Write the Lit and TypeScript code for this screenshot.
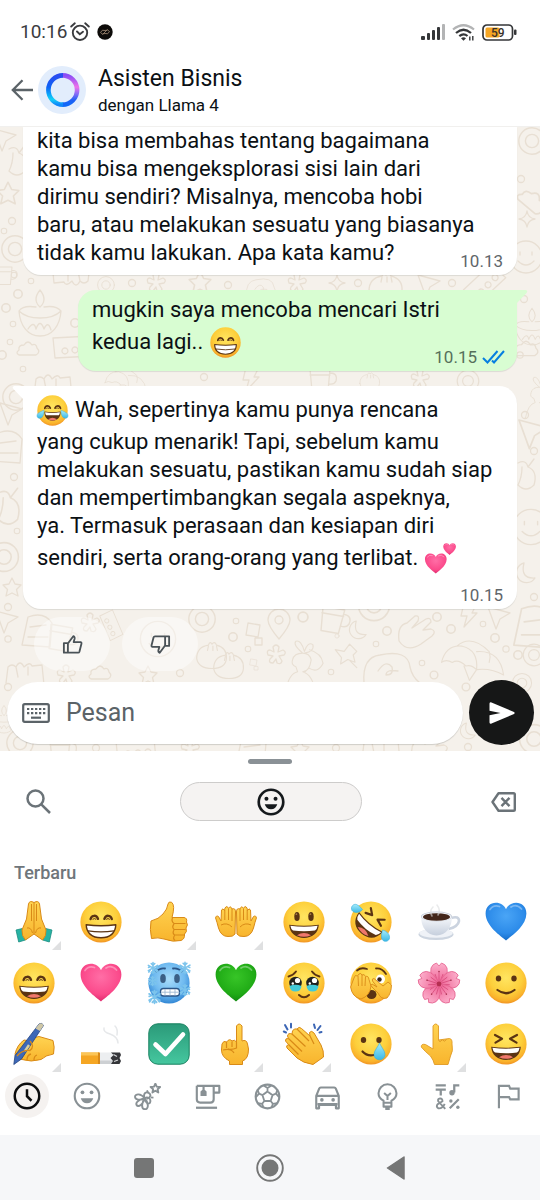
import { LitElement, html, svg, css, nothing, TemplateResult } from "lit";
import { customElement, property } from "lit/decorators.js";
import { classMap } from "lit/directives/class-map.js";

type Art = TemplateResult;

/* ---------- emoji artwork, drawn in a 42 x 42 box ---------- */

const BROWN = "#5b3413";
const face = svg`<circle cx="21" cy="21" r="20.6" fill="url(#face)" />`;

const tear = (d: string) => svg`<path d=${d} fill="url(#tear)" stroke="#39aede" stroke-width=".6" />`;

const grinEyes = svg`<g fill="none" stroke=${BROWN} stroke-width="2.4" stroke-linecap="round">
  <path d="M10.6 18c1.2-4.2 6-4.2 7.4-.2" /><path d="M24.4 17.8c1.4-4 6.2-4 7.4.2" /></g>
  <path d="M12.6 18.4q1.8-1.6 3.6 0M26.2 18.4q1.8-1.6 3.6 0" stroke=${BROWN} stroke-width="1" fill="none" />`;

const openMouth = svg`<path d="M6.2 23.8Q21 25.6 35.8 23.8C35.4 32.4 29 37 21 37S6.6 32.4 6.2 23.8Z" fill=${BROWN} />
  <path d="M7.4 24.8Q21 26.6 34.6 24.8Q34 28.6 32 29.6Q21 31 10 29.6Q8 28.6 7.4 24.8Z" fill="#fff" />
  <path d="M14 34.2Q21 29.6 28 34.2Q21 37.4 14 34.2Z" fill="#f0786c" />`;

const heart = (fill: string) => svg`<path
  d="M21 39.5C16 35 .8 25.500 .6 12.500C.6 5.500 5.600 1.800 10.800 1.800C15.500 1.800 19.300 4.400 21 8.200C22.700 4.400 26.500 1.800 31.200 1.800C36.400 1.800 41.400 5.500 41.400 12.500C41.200 25.500 26 35 21 39.500Z"
  fill=${fill} />
  <path d="M5 8.500Q8.500 3.500 14.500 5.500M26 6Q31.500 2.500 36.500 8" stroke="#fff" stroke-opacity=".35" stroke-width="1.800" fill="none" stroke-linecap="round" />`;

const flake = (x: number, y: number, s: number) => svg`<g transform="translate(${x} ${y}) scale(${s})"
  stroke="#7cc4ec" stroke-width="1.700" fill="none" stroke-linecap="round">
  <path d="M0-6V6M-5.200-3L5.200 3M-5.200 3L5.200-3M-2-5L0-3L2-5M-2 5L0 3L2 5M-5-.6L-2.800-1.600M-4.600 4.600L-2.600 1.500M5-.6L2.800-1.600M4.600 4.600L2.600 1.500" /></g>`;

const EMOJI: Record<string, Art> = {
  beam: svg`${face}${grinEyes}
    <path d="M6.200 23.800Q21 25.800 35.800 23.800C35.600 32 30 36.800 21 36.800S6.400 32 6.200 23.800Z" fill="#fff" stroke=${BROWN} stroke-width="1.400" stroke-linejoin="round" />
    <path d="M8 29.800Q21 32 34 29.800" fill="none" stroke=${BROWN} stroke-width="1.200" />`,
  smile: svg`${face}${grinEyes}${openMouth}`,
  smiley: svg`${face}<ellipse cx="14" cy="15.500" rx="2.700" ry="4.600" fill=${BROWN} /><ellipse cx="28" cy="15.500" rx="2.700" ry="4.600" fill=${BROWN} />
    <circle cx="13.400" cy="13.200" r=".9" fill="#a67a48" /><circle cx="27.400" cy="13.200" r=".9" fill="#a67a48" />${openMouth}`,
  laugh: svg`${face}<path d="M10 12L17 15.800L10.500 19.600M32 12L25 15.800L31.500 19.600" fill="none" stroke=${BROWN} stroke-width="2.200" stroke-linecap="round" stroke-linejoin="round" />${openMouth}`,
  joy: svg`${face}${grinEyes}
    <path d="M10 22.500Q21 24.500 32 22.500C32 30.500 28 35 21 35S10 30.500 10 22.500Z" fill=${BROWN} />
    <path d="M11 23.400Q21 25.400 31 23.400Q30.800 26.400 29.500 27.600H12.500Q11.200 26.400 11 23.400Z" fill="#fff" />
    <path d="M15 32.800Q21 28.600 27 32.800Q21 36 15 32.800Z" fill="#f0786c" />
    ${tear("M9.500 20.500C9.500 20.500 9.800 31 3.800 31.500C-.5 31.500-1 27 1.600 24.600Q4 22.500 9.500 20.500Z")}
    ${tear("M32.500 20.500C32.500 20.500 32.200 31 38.200 31.500C42.500 31.500 43 27 40.400 24.600Q38 22.500 32.500 20.500Z")}`,
  rofl: svg`${face}<g transform="rotate(40 21 21)">
      <path d="M12 10.500L17.500 15L11 17.500M30 10.500L24.500 15L31 17.500" fill="none" stroke=${BROWN} stroke-width="2.200" stroke-linecap="round" stroke-linejoin="round" />
      <path d="M5.500 21Q21 25 36.500 21C36 31.500 29.500 36 21 36S6 31.500 5.500 21Z" fill=${BROWN} />
      <path d="M6.600 22.400Q21 26 35.400 22.400Q35 26.500 33 28Q21 31 9 28Q7 26.500 6.600 22.400Z" fill="#fff" />
      <path d="M14 33.400Q21 28.500 28 33.400Q21 36.600 14 33.400Z" fill="#f0786c" /></g>
    ${tear("M12.500 8.500C10 12 4 12.500 2 9.500C.2 6 3.200 2.500 6.500 3.500Q9.500 4.500 12.500 8.500Z")}
    ${tear("M32.500 29C37 30 40.500 34 39.300 38C37.500 41.500 32.500 41 31.600 37Q31 33.500 32.500 29Z")}`,
  slight: svg`${face}<ellipse cx="13.500" cy="16.500" rx="2.700" ry="3" fill=${BROWN} /><ellipse cx="29" cy="16.500" rx="2.700" ry="3" fill=${BROWN} />
    <path d="M12.500 28Q21 34.500 29.500 28" fill="none" stroke=${BROWN} stroke-width="2.200" stroke-linecap="round" />`,
  happyTear: svg`${face}<ellipse cx="13.500" cy="17" rx="2.700" ry="3" fill=${BROWN} /><ellipse cx="29" cy="17" rx="2.700" ry="3" fill=${BROWN} />
    <path d="M12.500 28.500Q17 33.500 24 32" fill="none" stroke=${BROWN} stroke-width="2.200" stroke-linecap="round" />
    ${tear("M29.500 20C31 24 35 27.500 35 31.500C35 38.500 24 38.500 24 31.500C24 27.500 28 24 29.500 20Z")}`,
  holding: svg`${face}
    <path d="M5.500 14.500Q10 13.500 13 9.500M36.500 14.500Q32 13.500 29 9.500" fill="none" stroke=${BROWN} stroke-width="1.900" stroke-linecap="round" />
    <circle cx="12.500" cy="21" r="6.300" fill="#20201f" /><circle cx="29.500" cy="21" r="6.300" fill="#20201f" />
    <path d="M6.500 24Q12.500 21.500 18.500 24Q18 29.500 12.500 29.500T6.500 24ZM23.500 24Q29.500 21.500 35.500 24Q35 29.500 29.500 29.500T23.500 24Z" fill="#43c9d8" />
    <g fill="#fff"><circle cx="14.500" cy="18.500" r="2.600" /><circle cx="31.500" cy="18.500" r="2.600" /><circle cx="9.800" cy="21.500" r="1.200" /><circle cx="26.800" cy="21.500" r="1.200" /></g>
    <path d="M16 33Q21 37.500 26 33" fill="none" stroke=${BROWN} stroke-width="2" stroke-linecap="round" />`,
  peek: svg`${face}
    <path d="M7 8.500Q11 5 17 7M26 6.500Q32 6 36 12" fill="none" stroke=${BROWN} stroke-width="1.800" stroke-linecap="round" />
    <circle cx="30.500" cy="17" r="4.500" fill="#fff" /><circle cx="29.500" cy="17.500" r="2.200" fill="#39261a" />
    <ellipse cx="21.500" cy="32.500" rx="5" ry="4.500" fill=${BROWN} />
    <path d="M.6 25L4 16Q5 12 7.500 14L9 12Q11 10.500 12 13Q14.500 11.500 15.500 14.500Q18.500 13.500 19 17.500L21 24Q20 34 11 37Q2 35 .6 25Z" fill="url(#hand)" stroke="#d98a17" stroke-width=".9" />
    <path d="M41.400 23L38 20L33 24L24 16.500Q21.500 16.500 22.500 19L27 25L22 22Q20 23 22 25L28 31Q31 38 37 36Q41.500 31 41.400 23Z" fill="url(#hand)" stroke="#d98a17" stroke-width=".9" />
    <path d="M8 14L8.500 24M12 13L12 24M15.500 15L15 24" stroke="#d98a17" stroke-width=".9" />`,
  cold: svg`<circle cx="21" cy="21" r="20.600" fill="url(#ice)" />
    <path d="M8.500 9.500Q12 5.500 17 6.500M25 6.500Q30 5.500 33.500 9.500" fill="none" stroke="#2c5688" stroke-width="1.800" stroke-linecap="round" />
    <ellipse cx="15" cy="16.500" rx="2.800" ry="4.600" fill="#3b5f86" /><ellipse cx="29" cy="16.500" rx="2.800" ry="4.600" fill="#3b5f86" />
    <rect x="12.500" y="26.500" width="19" height="7.500" rx="3" fill="#fff" stroke="#2c5688" stroke-width="1.300" />
    <path d="M13 30.200H31M17 27V33.500M22 27V33.500M27 27V33.500" stroke="#9fb8d3" stroke-width=".9" />
    ${flake(5, 6, 0.9)}${flake(37, 6, 0.95)}${flake(4.5, 19, 0.75)}${flake(37, 28, 0.9)}${flake(6.5, 35, 1.05)}`,
  pinkHeart: heart("url(#pink)"),
  greenHeart: heart("url(#green)"),
  blueHeart: heart("url(#blue)"),
  twoHearts: svg`<g transform="translate(-.5 13) scale(.72)">${heart("url(#pink)")}</g><g transform="translate(24.500 -.5) scale(.42)">${heart("url(#pink)")}</g>`,
  check: svg`<rect x=".8" y=".8" width="40.400" height="40.400" rx="9" fill="url(#mint)" stroke="#17805f" stroke-width="1" />
    <path d="M7.500 21.500L17.500 31L35 11.500" fill="none" stroke="#fff" stroke-width="4.600" stroke-linecap="round" stroke-linejoin="round" />`,
  pray: svg`<path d="M8 27.500L1 29L4 41L11.500 39ZM34 27.500L41 29L38 41L30.500 39Z" transform="translate(2.100) scale(.9 1)" fill="#27b3a4" stroke="#15897c" stroke-width=".8" />
    <path d="M21 1.500Q16.500-1 15.500 3L13.500 18L9 29Q8.500 35 12.500 39L21 33L29.500 39Q33.500 35 33 29L28.500 18L26.500 3Q25.500-1 21 1.500Z" fill="url(#hand)" stroke="#d98a17" stroke-width="1" />
    <path d="M21 1.500V33M18.500 3V20M23.500 3V20M14 27Q18 26 19.500 32M28 27Q24 26 22.500 32" fill="none" stroke="#d98a17" stroke-width="1" />`,
  thumb: svg`<path d="M3 20Q11 18 15 13Q19.500 8 20 3Q20.500 .2 23.500 1.200Q27.500 4 24 16.500H36Q39.500 17 38.500 21Q40.500 24 38 27Q39.500 31 36.500 33Q37 38 33 39.500Q25 41.500 16 38Q10 36 3.500 37.500Q1.500 28 3 20Z" fill="url(#hand)" stroke="#d98a17" stroke-width="1" />
    <path d="M37.500 22.500H26Q23 20 24.500 17M37.500 28.500H26Q23.500 26 26 23M36 34H26.500Q24 32 26 29M27 39.500Q24.500 37.500 26.500 34.500" fill="none" stroke="#d98a17" stroke-width="1.200" />`,
  palms: svg`<path d="M20 33Q18 36 13 35.500Q6 35.500 3.500 27Q2 21 .6 17Q1 14 3.500 15.500L6 20L6.500 9Q8 6.500 9.500 9.500L10 7Q12 4 13.500 7.500Q15.500 4 17 8Q20.500 6.500 20.500 11Z" fill="url(#hand)" stroke="#d98a17" stroke-width="1" />
    <path d="M22 33Q24 36 29 35.500Q36 35.500 38.500 27Q40 21 41.400 17Q41 14 38.500 15.500L36 20L35.500 9Q34 6.500 32.500 9.500L32 7Q30 4 28.500 7.500Q26.500 4 25 8Q21.500 6.500 21.500 11Z" fill="url(#hand)" stroke="#d98a17" stroke-width="1" />
    <path d="M9.800 9V19M13.500 8V19M17 8V20M32.200 9V19M28.500 8V19M25 8V20M6 24Q12 21 17 26M36 24Q30 21 25 26" fill="none" stroke="#d98a17" stroke-width="1" />`,
  point: svg`<path d="M18 19V3Q20.500-1 23.500 3V18Q28 16 29 21L30 26Q30 36 24 38V41.500H11V38Q3 34 3 27L3.500 21Q5 17 8 19Q11 15 13.500 18Q16 16 18 19Z" fill="url(#hand)" stroke="#d98a17" stroke-width="1" transform="translate(3.500)" />
    <path d="M11.500 19V25M17 18.500V24M21.500 19V25Q17 27 13 26M8 27Q16 25 19 30" fill="none" stroke="#d98a17" stroke-width="1.200" />`,
  pointBack: svg`<path d="M12.500 20V3Q15-1 18 3V17L29 15.500Q32 16 31.500 21Q33 28 30 33L27.500 41.500H14Q13 37 10 33Q4 28 .8 24Q.5 20.500 5 21.500L12.500 26Z" fill="url(#hand)" stroke="#e09a24" stroke-width=".9" transform="translate(2.500)" />
    <path d="M20.500 17.500Q22 20 24 17M24.500 17Q26.500 19.500 28.500 16.500" fill="none" stroke="#e09a24" stroke-width="1" />`,
  clap: svg`<g stroke="#3c66b5" stroke-width="2" stroke-linecap="round"><path d="M2 2L4.500 6.500M8 .8L8 4.500M.8 8.500L3 9.500M37.500 3L34.500 7M31 1.500L32 5M38.500 9L36.500 9.500" /></g>
    <path d="M14 6Q16 3 18.500 5.500L27 13L26.500 9.500Q28.500 7 31 10L38 22Q41 28 40.500 34L30 41.500Q20 40 14 35L4 25Q2.500 22.500 5.500 21.500L2.500 18Q2 15 5.500 15.500L4.500 13Q5 9.500 9 11L9.500 8Q11 5 14 6Z" fill="url(#hand)" stroke="#d98a17" stroke-width="1" />
    <path d="M14 6L26 18M9 11L22.500 23.500M5.500 15.500L19 28.500M5.500 21.500L15.500 31.500M27 13L31 21" fill="none" stroke="#d98a17" stroke-width="1.200" />`,
  write: svg`<path d="M2 31Q4 22 11 17L17 18Q20 14 26 13.500L40 17.500Q42 24 40.500 31Q33 32 28 36.500Q18 39.500 9 36.500Q3 37 2 31Z" fill="url(#hand)" stroke="#d98a17" stroke-width="1" />
    <path d="M26 1Q29-1 30.500 2.500L8.500 36L.8 41.500L2 32.500Z" fill="#3d68b8" stroke="#234482" stroke-width=".8" />
    <path d="M26 1Q29-1 30.500 2.500L27 8L22.500 5.500Z" fill="#cfc7a6" /><path d="M16 22L12 28" stroke="#d9d0a2" stroke-width="2.400" />
    <path d="M4 33Q9 27 17 27.500Q22 23 17 18M14 37Q14 32 18 31M21 37Q21 33 24 32" fill="none" stroke="#d98a17" stroke-width="1.300" />`,
  smoke: svg`<path d="M1 29.500H19V41H1Z" fill="#f5a623" /><path d="M1 29.500H19V32.500H1Z" fill="#fbc557" /><rect x="18" y="29.500" width="2" height="11.500" fill="#d8891a" />
    <rect x="20" y="29.500" width="15" height="11.500" fill="#eceef0" /><rect x="20" y="37.500" width="15" height="3.500" fill="#cdd0d3" />
    <path d="M31 29.500H40L41 32L39.500 35L41 38L39.500 41H31L33 38L30.500 35L33.500 32Z" fill="#35363a" /><path d="M33.500 31.500L37 33.500M34 38.500L38 37" stroke="#d5d7d9" stroke-width="1.300" />
    <path d="M38 20Q38 14 30 11Q23 9 24 5M37 12Q38 6 35 3" fill="none" stroke="#e6e8ea" stroke-width="1.500" stroke-linecap="round" />`,
  coffee: svg`<ellipse cx="18" cy="33.500" rx="17.500" ry="5.500" fill="#cdd5e0" /><ellipse cx="18" cy="32.300" rx="16.500" ry="4.500" fill="#eff2f7" />
    <path d="M33 17Q41 14.500 41 20Q40 26 30.500 28" fill="none" stroke="#cbd3df" stroke-width="2.600" />
    <path d="M3 15.500C3 26 9 34.500 18.500 34.500S34 26 34 15.500Z" fill="url(#cup)" /><ellipse cx="18.500" cy="15.500" rx="15.500" ry="5" fill="#c3cad6" /><ellipse cx="18.500" cy="15.700" rx="14.700" ry="4.500" fill="#f1f3f7" />
    <ellipse cx="18.500" cy="16" rx="13.500" ry="3.800" fill="#43261a" />
    <path d="M14 15Q11 10 15 6M20 14Q23 9 19 4" fill="none" stroke="#dcdddf" stroke-opacity=".6" stroke-width="1.600" stroke-linecap="round" />`,
  blossom: svg`${[0, 72, 144, 216, 288].map(
      (a) => svg`<g transform="rotate(${a} 21 22)"><path d="M21 22Q11 14 13 6Q14.500 2 18.500 1L21 4L23.500 1Q27.500 2 29 6Q31 14 21 22Z" fill="url(#petal)" stroke="#e5628f" stroke-width=".8" />
      <path d="M21 20V10M19.500 19L17 12M22.500 19L25 12" stroke="#d84d7e" stroke-width=".8" /><circle cx="21" cy="9.500" r=".8" fill="#a8324f" /></g>`
    )}<circle cx="21" cy="22" r="2.400" fill="#b52f51" />`,
};

@customElement("emoji-glyph")
export class EmojiGlyph extends LitElement {
  @property() name = "smile";

  static styles = css`
    :host { display: inline-block; width: 42px; height: 42px; }
    .art { display: block; width: 100%; height: 100%; overflow: visible; }
  `;

  render() {
    return html`<svg class="art" viewBox="0 0 42 42" aria-hidden="true">
      <defs>
        <radialGradient id="face" cx=".5" cy=".38" r=".64"><stop offset="0" stop-color="#ffe561" /><stop offset=".6" stop-color="#fdcf3b" /><stop offset=".85" stop-color="#fab32c" /><stop offset="1" stop-color="#ee8b20" /></radialGradient>
        <radialGradient id="ice" cx=".5" cy=".4" r=".62"><stop offset="0" stop-color="#a9dcfa" /><stop offset=".6" stop-color="#6fbaf0" /><stop offset="1" stop-color="#2d83d3" /></radialGradient>
        <linearGradient id="hand" x2="0" y2="1"><stop offset="0" stop-color="#ffd452" /><stop offset="1" stop-color="#f8b42d" /></linearGradient>
        <linearGradient id="tear" x2="0" y2="1"><stop offset="0" stop-color="#a6ecfb" /><stop offset="1" stop-color="#3cb9e6" /></linearGradient>
        <radialGradient id="pink" cx=".5" cy=".35" r=".65"><stop offset="0" stop-color="#ff6ea6" /><stop offset=".7" stop-color="#fb4a8b" /><stop offset="1" stop-color="#e02a6d" /></radialGradient>
        <radialGradient id="green" cx=".5" cy=".35" r=".65"><stop offset="0" stop-color="#37c527" /><stop offset=".7" stop-color="#20ab16" /><stop offset="1" stop-color="#118a10" /></radialGradient>
        <radialGradient id="blue" cx=".5" cy=".35" r=".65"><stop offset="0" stop-color="#4aa5f6" /><stop offset=".7" stop-color="#2c8be9" /><stop offset="1" stop-color="#146cc9" /></radialGradient>
        <linearGradient id="mint" x2="0" y2="1"><stop offset="0" stop-color="#2b9a79" /><stop offset="1" stop-color="#45c79f" /></linearGradient>
        <linearGradient id="cup" x2="0" y2="1"><stop offset="0" stop-color="#f7f9fc" /><stop offset="1" stop-color="#c6cfdd" /></linearGradient>
        <linearGradient id="petal" x2="0" y2="1"><stop offset="0" stop-color="#fcb0cc" /><stop offset="1" stop-color="#ee6193" /></linearGradient>
      </defs>
      ${EMOJI[this.name] ?? nothing}
    </svg>`;
  }
}

/* ---------- wallpaper line drawings, each centred on the origin ---------- */

const DOODLES: Record<string, string> = {
  dot: "M3.500 0A3.500 3.500 0 1 1-3.500 0A3.500 3.500 0 1 1 3.500 0Z",
  ring: "M12 0A12 12 0 1 1-12 0A12 12 0 1 1 12 0ZM6 0A6 6 0 1 1-6 0A6 6 0 1 1 6 0Z",
  lamp: "M-21-5C-20 10-12 20 0 20S20 10 21-5M-21-5Q-14 2 0 2T21-5Q16-11 4-9M-21-5Q-17-11-4-9M0-9Q-8-16 0-26Q8-16 0-9M-12 13Q-6 4-4 13Q0 2 4 13Q8 4 11 14",
  cloud: "M-9 6H8Q13 3 9-1Q8-6 4-4Q0-10-4-4Q-10-4-9 1Q-13 4-9 6Z",
  pin: "M0 14Q-11 1-11-5A11 11 0 1 1 11-5Q11 1 0 14ZM4-5A4 4 0 1 1-4-5A4 4 0 1 1 4-5Z",
  moon: "M-2-10A10 10 0 1 0 9 5Q-6 6-2-10Z",
  star: "M0-9L3-3L9-2L4.500 2.500L6 9L0 6L-6 9L-4.500 2.500L-9-2L-3-3Z",
  spark: "M0-8Q1-1 8 0Q1 1 0 8Q-1 1-8 0Q-1-1 0-8Z",
  bun: "M-17 4Q-17-9-4-11Q-2-16 0-12Q3-16 5-11Q17-8 16 4Q15 15 0 15T-17 4ZM-4-10L-5-5M1-10V-5M5-10L6-5",
  rock: "M-18 8Q-20-8-10-10L-2-17Q3-18 1-12L-5-5L9-14Q14-16 14-11L6-3L14-4Q20-2 15 3L4 11Q-10 20-18 8Z",
  umbrella: "M-25 6Q-20-14-2-12Q16-8 14 14Q8 8 2 10Q-6 2-13 6Q-20 2-25 6ZM-8-12Q8-26 28-6Q30 0 28 6M14-6Q40-8 44 20Q30 12 14 14M0 10L6 26L14 14",
  flower: "M-3-8Q0-12 3-8L2-3L7-5Q11-3 8 0L3 1L6 6Q5 10 1 8L0 4L-3 8Q-8 8-6 4L-3 1L-8 0Q-10-5-6-5L-2-3Z",
  tack: "M-12-6L-2-4L4-12L12-4L8 0L10 8L2 5L-6 10L-5 3L-12-6ZM4 6L12 14",
  box: "M-6-8L6-6L4 6L-8 4ZM1 7H8V14H1Z",
  girl: "M-18 30Q-14 10-4 8L-6 2Q-12 0-10-6Q-8-14 2-14Q10-14 12-6Q10 8 2 8Q14 12 16 30M2-14Q-10-24-6-28Q0-30 4-16Q8-28 14-24Q16-16 4-14M10-18Q24-14 26-2Q20 10 10 4",
  blob: "M-26 16Q-28-10-10-12Q18-18 20 0Q22 10 30 16M-12 4Q-4-8 2 0Q4 8-4 8Q-4 2 8 4",
  cup: "M-10-10H10L8 12H-8ZM10-6Q18-6 16 2Q14 6 9 5M-10-4H10",
  plane: "M-10-10L12-4L2 2L-2 12Z",
  bolt: "M-4-12L8-10L4-2H9L-4 12L-1 1H-7Z",
  cake: "M-18 12L-16-4Q-12-8-8-4Q-4-12 0-4Q6-10 8-5L18-6L20 14M-8-4L-6 6M4-4V4",
  loaf: "M-14 14L-8-14Q8-20 16-8L14 16ZM-6-4L10-6M-8 6H12",
  pepper: "M-8-10Q0-14 2-6Q12-2 8 12Q0 20-8 12Q-4 4-4-6M2-6L8-14",
  smileFace: "M16 0A16 16 0 1 1-16 0A16 16 0 1 1 16 0ZM-6-5V-2M6-5V-2M-8 4Q0 12 8 4",
  box2: "M-20-8L18-10L20 10L-18 12ZM-8 2A3 3 0 1 1-8.100 2M2 1A3 3 0 1 1 1.900 1M12 0A3 3 0 1 1 11.900 0",
};

const PLACED: [string, number, number, number?, number?][] = [
  ["plane", 4, 12], ["pepper", 17, 32], ["star", 8, 66, 1.2], ["dot", 12, 94], ["dot", 4, 104, 0.8], ["ring", 15, 122, 1.1],
  ["cup", 4, 148, 0.8], ["dot", 14, 148, 0.8], ["dot", 18, 167, 1.2], ["lamp", 40, 189], ["dot", 31, 154, 0.8], ["dot", 6, 181, 1.2], ["dot", 13, 197, 0.8],
  ["dot", 75, 196, 1.2], ["cloud", 28, 222], ["dot", 10, 215, 0.8], ["box2", 73, 219], ["dot", 2, 228, 1.2], ["cake", 52, 256], ["dot", 23, 242, 0.8], ["ring", 16, 270, 1.1],
  ["cake", 72, 150, 1, 180], ["ring", 106, 158, 0.7], ["flower", 156, 156], ["dot", 132, 156], ["star", 200, 155, 1.2], ["dot", 228, 158], ["blob", 262, 160, 0.6],
  ["flower", 297, 156], ["spark", 337, 156], ["dot", 358, 156], ["bun", 386, 160], ["plane", 428, 158], ["dot", 452, 156], ["box2", 484, 156, 1, -40],
  ["ring", 532, 14, 1.1], ["dot", 521, 52], ["cloud", 532, 74, 1.3, 40], ["spark", 527, 92], ["smileFace", 526, 130, 1], ["lamp", 532, 202, 0.8], ["dot", 524, 172], ["dot", 520, 228, 0.9],
  ["cloud", 526, 222, 1.1], ["umbrella", 120, 252, 0.6], ["flower", 420, 252], ["ring", 468, 254, 0.9], ["dot", 204, 250], ["bolt", 250, 252], ["cup", 320, 252], ["bun", 370, 254, 0.6],
  ["plane", 10, 286], ["loaf", 6, 320], ["dot", 14, 350], ["pepper", 8, 378, 1.2], ["dot", 17, 404, 0.8], ["ring", 4, 430, 1.2], ["star", 12, 460], ["dot", 8, 480],
  ["girl", 538, 270, 0.7], ["dot", 525, 288], ["plane", 532, 306, 1.3], ["dot", 534, 324], ["pepper", 526, 346], ["smileFace", 531, 400, 1.1], ["moon", 526, 446], ["dot", 534, 470],
  ["plane", 6, 494], ["loaf", 36, 504, 1], ["dot", 8, 512, 0.9], ["cup", 60, 510, 1.1, 10], ["flower", 90, 496], ["box2", 112, 498, 0.7, 70], ["smileFace", 158, 512, 1.1], ["ring", 202, 492, 1.1],
  ["bun", 212, 528, 0.9], ["bun", 229, 538, 0.9], ["dot", 236, 494, 0.8], ["dot", 233, 510, 1.2], ["box", 254, 504], ["pin", 279, 498], ["dot", 303, 490, 1.4], ["dot", 248, 522, 0.8], ["flower", 276, 528],
  ["box", 254, 536, 0.5], ["girl", 301, 538, 0.85], ["cup", 332, 492, 1.1, 10], ["dot", 337, 509, 0.6], ["moon", 358, 503, 0.9], ["ring", 374, 478, 1.3], ["dot", 387, 504, 1.2], ["dot", 376, 517, 0.8],
  ["tack", 346, 528, 0.9], ["rock", 417, 506], ["dot", 437, 490, 1.2], ["dot", 451, 502, 1.2], ["blob", 390, 540], ["bolt", 468, 488], ["plane", 498, 490], ["dot", 483, 497, 0.8],
  ["umbrella", 464, 530, 0.9], ["dot", 495, 511, 1.2], ["dot", 506, 522, 0.9], ["dot", 518, 528, 1.2], ["loaf", 532, 500, 1.3], ["ring", 534, 528, 0.9], ["dot", 422, 536, 0.8], ["dot", 434, 548, 1.1], ["dot", 331, 545, 0.8],
  ["cake", 24, 544], ["dot", 8, 560], ["flower", 66, 548], ["cloud", 100, 546], ["star", 148, 548], ["dot", 180, 546], ["ring", 522, 556, 0.8], ["ring", 20, 616, 1.1], ["cup", 60, 622], ["dot", 96, 621],
  ["box2", 136, 622], ["flower", 190, 622], ["loaf", 250, 624], ["star", 300, 622], ["dot", 336, 621], ["cake", 380, 620], ["rock", 430, 622], ["dot", 468, 620], ["ring", 534, 612, 1.2], ["lamp", 4, 594, 0.6],
  ["dot", 466, 560, 1.1], ["moon", 468, 604, 0.8],
];

/* ---------- interface icons ---------- */

const icon = (size: number, body: Art, box = "0 0 24 24") =>
  html`<svg class="icon" width=${size} height=${size} viewBox=${box} fill="none" stroke="currentColor" stroke-width="2" aria-hidden="true">${body}</svg>`;

const smileIcon = svg`<circle cx="12" cy="12" r="9.200" /><circle cx="8.600" cy="9.600" r="1.500" fill="currentColor" stroke="none" /><circle cx="15.400" cy="9.600" r="1.500" fill="currentColor" stroke="none" />
  <path d="M7.300 13.600H16.700Q15.600 17.400 12 17.400T7.300 13.600Z" fill="currentColor" stroke="none" />`;

const thinSmileIcon = svg`<circle cx="12" cy="12" r="9.200" stroke-width="1.600" /><circle cx="8.600" cy="9.200" r="1.400" fill="currentColor" stroke="none" /><circle cx="15.400" cy="9.200" r="1.400" fill="currentColor" stroke="none" />
  <path d="M7.300 13.600H16.700Q15.600 17.400 12 17.400T7.300 13.600Z" fill="currentColor" stroke="none" />`;

const thumbIcon = svg`<path d="M3 10.500H7.200V20.500H3ZM7.200 11L12.800 3.300Q14.600 4 14.200 6L13.200 9.500H20.600Q21.600 9.700 21.400 11L19.200 19.500Q18.900 20.500 17.800 20.500H7.200" stroke-width="1.900" stroke-linejoin="round" />`;

const CATEGORIES: { id: string; label: string; art: Art; size?: number }[] = [
  { id: "recent", label: "Terbaru", size: 30, art: svg`<circle cx="12" cy="12" r="9.800" /><path d="M12 6.500V12.200L15.600 15.800" />` },
  { id: "smileys", label: "Smiley", size: 32, art: thinSmileIcon },
  {
    id: "nature", label: "Hewan dan alam",
    art: svg`<g stroke-width="1.700" stroke-linejoin="round"><path d="M19 .5L20.200 3.200L23.200 3.500L21 5.500L21.600 8.400L19 6.900L16.400 8.400L17 5.500L14.800 3.500L17.800 3.200Z" />
      <path d="M9.500 13.500C6 9 1 9.500 .9 12.200S5.500 16 9.500 13.500ZM9.500 13.500C5 14.500 1 17 2.300 19.500S8.500 19 9.500 13.500ZM9.500 13.500C7 17 6 23 9.500 23.300S13.500 18 9.500 13.500ZM9.500 13.500C12 12 15 13.500 14.500 16.500S11 19 9.500 13.500ZM9 12.500C8.500 9 10.500 7.500 13 8.800S15 12.800 11.500 14" /><path d="M12.500 8.500L11.500 6.500M14.800 12.800L17.300 13" /></g>`,
  },
  {
    id: "food", label: "Makanan dan minuman",
    art: svg`<path d="M2.500 2.500H22.500V8.500H17.500M17.500 2.500V14.500Q17.500 17.500 14.500 17.500H5.500Q2.500 17.500 2.500 14.500V2.500M8.500 2.500V6" stroke-width="1.900" stroke-linejoin="round" /><path d="M5.800 11.500V7.600L8.500 5L11.200 7.600V11.500Z" fill="currentColor" stroke="none" /><path d="M1.800 22H20.500" />`,
  },
  {
    id: "sports", label: "Aktivitas",
    art: svg`<circle cx="12" cy="12" r="10.500" stroke-width="1.900" /><path d="M12 7.500L16.500 10.800L14.800 16H9.200L7.500 10.800ZM12 7.500V4.500L8.500 2.300M12 4.500L15.500 2.300M16.500 10.800L19.500 9.500L21 5.800M19.500 9.500L22.300 12.500M14.800 16L16.800 18.500L20.500 18M16.800 18.500L15.500 22M9.200 16L7.200 18.500L3.500 18M7.200 18.500L8.500 22M7.500 10.800L4.500 9.500L3 5.800M4.500 9.500L1.700 12.500" stroke-width="1.600" />`,
  },
  {
    id: "travel", label: "Perjalanan",
    art: svg`<path d="M2 11.500L4.600 5Q5 4 6 4H18Q19 4 19.400 5L22 11.500V22.500H19.500V19.500H4.500V22.500H2ZM2 11.500H22" stroke-width="1.900" stroke-linejoin="round" /><path d="M3 18.800H21" /><circle cx="7" cy="15" r="1.600" fill="currentColor" stroke="none" /><circle cx="17" cy="15" r="1.600" fill="currentColor" stroke="none" />`,
  },
  {
    id: "objects", label: "Objek",
    art: svg`<path d="M8.500 17.500V15.800Q4 13.500 4 9.200A8 8 0 0 1 20 9.200Q20 13.500 15.500 15.800V17.500ZM8.500 17.500V21H15.500V17.500M12 15V11.500L9 8.800M12 11.500L15 8.800M10 23H14" stroke-width="1.800" stroke-linejoin="round" />`,
  },
  {
    id: "symbols", label: "Simbol",
    art: svg`<path d="M1.500 2H10.500M1.500 5.800H10.500M6 6V11M18 8.500V2H22.500M14 22.500L22 14.500" /><circle cx="16" cy="8.700" r="2.400" fill="currentColor" stroke="none" /><circle cx="15" cy="16" r="1.500" fill="currentColor" stroke="none" /><circle cx="21.200" cy="21.500" r="1.500" fill="currentColor" stroke="none" />
      <path d="M10 23L3.800 16.300Q3 14 5.300 13.800T7.500 16.200L3.300 18.800Q1.500 21 3.800 22.500Q7.500 23 9.500 18.500" stroke-width="1.700" />`,
  },
  { id: "flags", label: "Bendera", art: svg`<path d="M3.500 22.500V2.500H12.500L13.500 5H21V14.500H13.500L12.500 12.500H3.500" stroke-width="1.900" />` },
];

const RECENT: { name: string; label: string; variants?: boolean }[] = [
  { name: "pray", label: "Tangan terlipat", variants: true },
  { name: "beam", label: "Wajah berseri" },
  { name: "thumb", label: "Jempol ke atas", variants: true },
  { name: "palms", label: "Telapak terbuka", variants: true },
  { name: "smiley", label: "Wajah tersenyum lebar" },
  { name: "rofl", label: "Tertawa terguling" },
  { name: "coffee", label: "Kopi" },
  { name: "blueHeart", label: "Hati biru" },
  { name: "smile", label: "Wajah tertawa" },
  { name: "pinkHeart", label: "Hati merah muda" },
  { name: "cold", label: "Kedinginan" },
  { name: "greenHeart", label: "Hati hijau" },
  { name: "holding", label: "Menahan tangis" },
  { name: "peek", label: "Mengintip" },
  { name: "blossom", label: "Bunga sakura" },
  { name: "slight", label: "Senyum tipis" },
  { name: "write", label: "Menulis", variants: true },
  { name: "smoke", label: "Rokok" },
  { name: "check", label: "Centang" },
  { name: "point", label: "Telunjuk ke atas", variants: true },
  { name: "clap", label: "Tepuk tangan", variants: true },
  { name: "happyTear", label: "Senyum berlinang" },
  { name: "pointBack", label: "Punggung telunjuk", variants: true },
  { name: "laugh", label: "Tertawa terpejam" },
];

interface Line { text: string; before?: string; after?: string }
interface Message { kind: "cut" | "out" | "in"; time: string; lines: Line[] }

const MESSAGES: Message[] = [
  {
    kind: "cut", time: "10.13",
    lines: [
      { text: "kita bisa membahas tentang bagaimana" },
      { text: "kamu bisa mengeksplorasi sisi lain dari" },
      { text: "dirimu sendiri? Misalnya, mencoba hobi" },
      { text: "baru, atau melakukan sesuatu yang biasanya" },
      { text: "tidak kamu lakukan. Apa kata kamu?" },
    ],
  },
  {
    kind: "out", time: "10.15",
    lines: [{ text: "mugkin saya mencoba mencari Istri" }, { text: "kedua lagi..", after: "beam" }],
  },
  {
    kind: "in", time: "10.15",
    lines: [
      { text: "Wah, sepertinya kamu punya rencana", before: "joy" },
      { text: "yang cukup menarik! Tapi, sebelum kamu" },
      { text: "melakukan sesuatu, pastikan kamu sudah siap" },
      { text: "dan mempertimbangkan segala aspeknya," },
      { text: "ya. Termasuk perasaan dan kesiapan diri" },
      { text: "sendiri, serta orang-orang yang terlibat.", after: "twoHearts" },
    ],
  },
];

@customElement("app-root")
export class AppRoot extends LitElement {
  static styles = css`
    :host { display: block; font-family: Roboto, "Noto Sans", sans-serif; color: #0b1014; background: #fff; }
    * { box-sizing: border-box; }
    button { font: inherit; color: inherit; background: none; border: 0; padding: 0; margin: 0; cursor: pointer; display: flex; align-items: center; justify-content: center; }
    .icon { display: block; flex: none; }
    .screen { display: flex; flex-direction: column; min-height: 100vh; }

    .status { display: flex; align-items: center; height: 64px; padding: 0 23px 0 20px; color: #3b3c3f; font-size: 19px; line-height: 24px; }
    .status .left, .status .right { display: flex; align-items: center; }
    .status .left { gap: 3px; flex: 1; }
    .status .dot { margin-left: 4px; }
    .status .right { gap: 7px; }

    .bar { display: flex; align-items: center; height: 63px; padding: 0 11px 10px; border-bottom: 1px solid #f1f0ee; }
    .back { color: #5b6368; margin-right: 5px; }
    .avatar { display: block; margin-right: 12px; }
    .names { padding-top: 2px; }
    .title { margin: 0; font-size: 23px; line-height: 28px; font-weight: 400; }
    .subtitle { margin: 0; font-size: 17px; line-height: 24px; }

    .chat { position: relative; flex: 1; display: flex; flex-direction: column; background: #f5f1eb; overflow: hidden; }
    .wallpaper { position: absolute; inset: 0; width: 100%; height: 100%; }
    .thread { position: relative; display: flex; flex-direction: column; gap: 15px; padding: 0 23px; }
    .bubble { position: relative; background: #fff; border-radius: 18px; padding: 6px 14px; box-shadow: 0 1px 1px rgba(11, 16, 20, .1); font-size: 22px; line-height: 28px; }
    .bubble.cut { border-radius: 0 0 18px 18px; padding-top: 0; padding-bottom: 8px; }
    .bubble.out { margin-left: 55px; background: #d8fdd2; border-top-right-radius: 0; padding-bottom: 11px; }
    .bubble.in { border-top-left-radius: 0; padding-bottom: 33px; }
    .tail { position: absolute; top: 0; width: 11px; height: 13px; }
    .out .tail { left: 100%; fill: #d8fdd2; }
    .in .tail { right: 100%; fill: #fff; transform: scaleX(-1); }
    .text { margin: 0; }
    .line { display: flex; align-items: center; height: 28px; white-space: nowrap; }
    .line.tall { height: 36px; gap: 7px; }
    .line emoji-glyph { width: 31px; height: 31px; }
    .meta { position: absolute; right: 14px; bottom: 4px; display: flex; align-items: center; gap: 5px; font-size: 17px; line-height: 20px; color: #5f666a; }
    .out .meta { right: 12px; }
    .out .meta { color: #55705a; }
    .ticks { display: block; color: #067fe0; }

    .feedback { position: relative; display: flex; gap: 12px; margin-top: 8px; padding-left: 34px; }
    .feedback button { width: 76px; height: 54px; border-radius: 27px; background: rgba(255, 255, 255, .45); color: #4a5257; }
    .down { transform: rotate(180deg); }

    .composer { position: relative; display: flex; align-items: center; gap: 6px; margin-top: auto; padding: 9px 6px 6px 7px; }
    .field { flex: 1; min-width: 0; display: flex; align-items: center; gap: 16px; height: 62px; padding: 0 15px; border-radius: 31px; background: #fff; box-shadow: 0 1px 1px rgba(11, 16, 20, .16); color: #5b6368; }
    .field input { flex: 1; min-width: 0; border: 0; outline: 0; padding: 0; background: none; font: inherit; font-size: 25px; line-height: 32px; color: #0b1014; }
    .field input::placeholder { color: #5b6368; opacity: 1; }
    .send { flex: none; width: 65px; height: 65px; border-radius: 50%; background: #161717; color: #fff; }

    .panel { display: flex; flex-direction: column; padding-top: 8px; background: #fff; color: #6b7378; }
    .handle { align-self: center; width: 44px; height: 5px; border-radius: 3px; background: #8a9196; }
    .tools { display: grid; grid-template-columns: 1fr 182px 1fr; align-items: center; margin-top: 18px; padding: 0 24px 0 26px; }
    .tools .erase { justify-self: end; }
    .tools .find { justify-self: start; }
    .tab { height: 39px; border: 1px solid #cdcccb; border-radius: 20px; background: #f5f3f2; color: #15191c; }
    .heading { margin: 40px 14px 0; font-size: 18px; line-height: 24px; font-weight: 500; color: #6f767b; }
    .grid { display: grid; grid-template-columns: repeat(8, 1fr); grid-auto-rows: 61px; margin-top: 6px; }
    .cell { position: relative; }
    .corner { position: absolute; right: 7px; bottom: 2px; width: 9px; height: 9px; fill: #dfe0e1; }
    .cats { display: flex; justify-content: space-between; padding: 0 10px 17px 5px; color: #899195; }
    .cat { width: 44px; height: 44px; border-radius: 50%; }
    .cat.active { background: #f5f2f0; color: #0b0d0e; }

    .nav { display: grid; grid-template-columns: repeat(3, 126px); justify-content: center; flex: none; height: 65px; background: #f6f7f9; color: #757676; }
  `;

  private wallpaper() {
    return html`<svg class="wallpaper" viewBox="0 0 540 624" preserveAspectRatio="xMidYMid slice" aria-hidden="true">
      <g fill="none" stroke="#e8dfd3" stroke-width="1.300" stroke-linejoin="round" stroke-linecap="round">
        ${PLACED.map(([shape, x, y, s = 1, r = 0]) => svg`<path d=${DOODLES[shape]} transform="translate(${x} ${y}) rotate(${r}) scale(${s})" />`)}
      </g>
    </svg>`;
  }

  private bubble(m: Message) {
    return html`<article class=${classMap({ bubble: true, [m.kind]: true })}>
      ${m.kind === "cut" ? nothing : html`<svg class="tail" viewBox="0 0 11 13" aria-hidden="true"><path d="M0 0H8.500Q11.500 .5 9.500 3L0 13Z" /></svg>`}
      <p class="text">
        ${m.lines.map((l) => html`<span class=${classMap({ line: true, tall: !!(l.before || l.after) })}>
          ${l.before ? html`<emoji-glyph name=${l.before}></emoji-glyph>` : nothing}<span>${l.text}</span>${l.after ? html`<emoji-glyph name=${l.after}></emoji-glyph>` : nothing}
        </span>`)}
      </p>
      <div class="meta"><time>${m.time}</time>
        ${m.kind === "out" ? html`<svg class="ticks" width="23" height="14" viewBox="0 0 23 14" fill="none" stroke="currentColor" stroke-width="2" aria-hidden="true"><path d="M1 8L5.500 12.500L15.500 1M10 10.500L12 12.500L22 1" /></svg>` : nothing}
      </div>
    </article>`;
  }

  render() {
    return html`<div class="screen">
      <div class="status">
        <div class="left">
          <span>10:16</span>
          <svg class="icon" width="20" height="20" viewBox="0 0 20 20" fill="none" stroke="currentColor" stroke-width="1.900" stroke-linecap="round"><circle cx="10" cy="10.800" r="7.200" /><path d="M1.200 4.500L4.800 1.300M18.800 4.500L15.200 1.300M7 9.500L9.800 12.200L13 9.800" /></svg>
          <svg class="icon dot" width="16" height="16" viewBox="0 0 16 16"><circle cx="8" cy="8" r="7.700" fill="#0d0b09" /><path d="M3.500 8.500Q5 5 8 6.500Q11 5 12.500 7.500Q11 11 8 9.500Q5 11 3.500 8.500ZM5.500 10.500L10.500 5.500" fill="none" stroke="#96806c" stroke-width=".9" /></svg>
        </div>
        <div class="right">
          <svg class="icon" width="24" height="16" viewBox="0 0 24 16" fill="#343638"><rect x="0" y="12" width="4" height="4" rx="1" /><rect x="6" y="9" width="3" height="7" rx="1" /><rect x="11" y="6" width="3" height="10" rx="1" /><rect x="16" y="3" width="3" height="13" rx="1" /><rect x="21" y="0" width="3" height="16" rx="1" fill="#b3b4b5" /></svg>
          <svg class="icon" width="23" height="17" viewBox="0 0 23 17" fill="none" stroke="#343638" stroke-width="2.200"><path d="M1 5.500Q11.500-3 22 5.500" stroke="#b3b4b5" /><path d="M4 9Q11.500 2.500 19 9M7.300 12.200Q11.500 8.500 15.500 12" /><path d="M9 14.200Q11.500 12.500 14 14.200L11.500 16.800Z" fill="#343638" stroke="none" /><path d="M17.800 16.500V12.500M20.800 12V16.500" stroke-width="1.400" /></svg>
          <svg class="icon" width="35" height="17" viewBox="0 0 35 17"><rect x="1" y="1" width="29.500" height="15" rx="4" fill="#fff" stroke="#343638" stroke-width="1.700" /><rect x="3.500" y="3.500" width="14" height="10" rx="1.500" fill="#f5a623" /><rect x="32" y="5.500" width="2.500" height="5.500" rx="1" fill="#343638" /><text x="15.700" y="12.700" text-anchor="middle" font-family="Roboto, sans-serif" font-size="12" font-weight="500" fill="#37302a">59</text></svg>
        </div>
      </div>

      <header class="bar">
        <button class="back" aria-label="Kembali"><svg class="icon" width="22" height="22" viewBox="0 0 22 22" fill="none" stroke="currentColor" stroke-width="2.300"><path d="M22 11H2M11.500 1.200L1.800 11L11.500 20.800" /></svg></button>
        <svg class="avatar" width="48" height="48" viewBox="0 0 48 48" role="img" aria-label="Asisten Bisnis">
          <defs>
            <linearGradient id="ringRight" x1="0" y1="0" x2="0" y2="1"><stop offset="0" stop-color="#8a4df5" /><stop offset=".4" stop-color="#ee72ea" /><stop offset=".62" stop-color="#8c6cf6" /><stop offset=".85" stop-color="#1e60f5" /><stop offset="1" stop-color="#1168f7" /></linearGradient>
            <linearGradient id="ringLeft" x1="0" y1="0" x2="0" y2="1"><stop offset="0" stop-color="#2a4cf0" /><stop offset=".4" stop-color="#0d62f5" /><stop offset=".68" stop-color="#0aaefa" /><stop offset=".82" stop-color="#14d0f6" /><stop offset="1" stop-color="#0f86fa" /></linearGradient>
          </defs>
          <circle cx="24" cy="24" r="24" fill="#e2edfc" />
          <g fill="none" stroke-width="4.600"><path d="M24.500 9.400A14.600 14.600 0 0 1 24.500 38.600" stroke="url(#ringRight)" /><path d="M25 38.600A14.600 14.600 0 0 1 25 9.400" stroke="url(#ringLeft)" /></g>
        </svg>
        <div class="names"><h1 class="title">Asisten Bisnis</h1><p class="subtitle">dengan Llama 4</p></div>
      </header>

      <main class="chat">
        ${this.wallpaper()}
        <section class="thread">${MESSAGES.map((m) => this.bubble(m))}</section>
        <div class="feedback">
          <button aria-label="Suka">${icon(23, thumbIcon)}</button>
          <button aria-label="Tidak suka"><span class="down">${icon(23, thumbIcon)}</span></button>
        </div>
        <form class="composer" @submit=${(e: Event) => e.preventDefault()}>
          <div class="field">
            <button type="button" aria-label="Papan ketik">
              <svg class="icon" width="28" height="20" viewBox="0 0 28 20" fill="none" stroke="currentColor" stroke-width="2.200"><rect x="1.200" y="1.200" width="25.600" height="17.600" rx="1.500" /><path d="M5 6H23.500M5 10.200H23.500" stroke-dasharray="2.300 1.700" /><path d="M9 14.700H19" /></svg>
            </button>
            <input aria-label="Pesan" placeholder="Pesan" />
          </div>
          <button class="send" aria-label="Kirim"><svg class="icon" width="26" height="22" viewBox="0 0 26 22" fill="currentColor"><path d="M.5 1.500Q.8-.3 2.500 .4L25 10Q26.300 11 25 12L2.500 21.600Q.8 22.300 .5 20.500V13.300L11.500 11L.5 8.700Z" /></svg></button>
        </form>
      </main>

      <section class="panel">
        <div class="handle"></div>
        <div class="tools">
          <button class="find" aria-label="Cari"><svg class="icon" width="25" height="25" viewBox="0 0 25 25" fill="none" stroke="currentColor" stroke-width="2.500"><circle cx="9.500" cy="9.500" r="8" /><path d="M15.300 15.300L24 24" /></svg></button>
          <button class="tab" aria-label="Emoji">${icon(32, smileIcon)}</button>
          <button class="erase" aria-label="Hapus"><svg class="icon" width="25" height="20" viewBox="0 0 25 20" fill="none" stroke="currentColor" stroke-width="2.400"><path d="M7.500 1.200H22.500Q23.800 1.200 23.800 2.500V17.500Q23.800 18.800 22.500 18.800H7.500L1.500 10ZM10.500 5.800L18.500 14.200M18.500 5.800L10.500 14.200" stroke-linejoin="round" /></svg></button>
        </div>
        <h2 class="heading">Terbaru</h2>
        <div class="grid">
          ${RECENT.map((e) => html`<button class="cell" aria-label=${e.label}><emoji-glyph name=${e.name}></emoji-glyph>${e.variants ? html`<svg class="corner" viewBox="0 0 9 9"><path d="M9 0V9H0Z" /></svg>` : nothing}</button>`)}
        </div>
        <div class="cats">
          ${CATEGORIES.map((c) => html`<button class=${classMap({ cat: true, active: c.id === "recent" })} aria-label=${c.label}>${icon(c.size ?? 27, c.art)}</button>`)}
        </div>
      </section>

      <nav class="nav">
        <button aria-label="Aplikasi terbaru"><svg class="icon" width="20" height="20"><rect width="20" height="20" rx="3" fill="currentColor" /></svg></button>
        <button aria-label="Beranda"><svg class="icon" width="28" height="28" viewBox="0 0 28 28"><circle cx="14" cy="14" r="12.800" fill="none" stroke="currentColor" stroke-width="1.900" /><circle cx="14" cy="14" r="8.500" fill="currentColor" /></svg></button>
        <button aria-label="Kembali"><svg class="icon" width="20" height="24" viewBox="0 0 20 24"><path d="M18 1V23L1.500 12Z" fill="currentColor" stroke="currentColor" stroke-width="1.500" stroke-linejoin="round" /></svg></button>
      </nav>
    </div>`;
  }
}
